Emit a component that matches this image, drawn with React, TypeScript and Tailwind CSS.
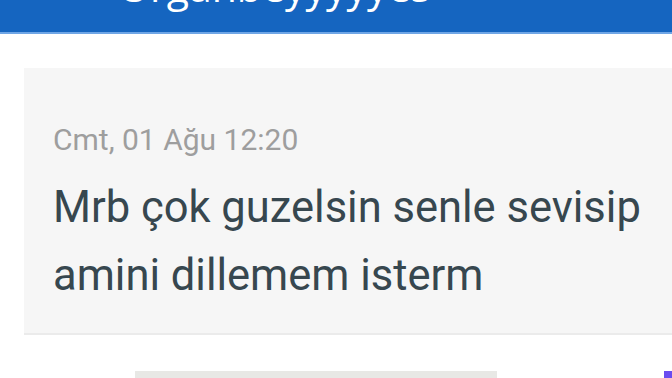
export default function App() {
  return (
    <div className="w-[672px] h-[378px] overflow-hidden bg-white" style={{ fontFamily: "Roboto, 'Noto Sans', sans-serif" }}>
      <div className="h-[34px] bg-[#1565c0] border-b-2 border-[#6fa6e6] overflow-hidden">
        <div
          className="pl-[118px] mt-[-34px] text-[41px] leading-[41px] text-white whitespace-nowrap"
          style={{ fontFamily: "'Open Sans', sans-serif" }}
        >
          Organbeyyyyyes
        </div>
      </div>
      <div className="mt-[34px] ml-[24px] h-[267px] bg-[#f6f6f6] border-b-2 border-[#ebebeb] pl-[29px] pt-[57px]">
        <div className="text-[30px] leading-[30px] text-[#9e9e9e] whitespace-nowrap">Cmt, 01 Ağu 12:20</div>
        <div className="mt-[19px] text-[43.5px] leading-[68px] text-[#37474f] whitespace-nowrap">
          <div>Mrb çok guzelsin senle sevisip</div>
          <div>amini dillemem isterm</div>
        </div>
      </div>
      <div className="mt-[36px] flex">
        <div className="ml-[135px] w-[362px] h-[10px] bg-[#e8e8e5]" />
        <div className="ml-[167px] w-[8px] h-[10px] bg-[#6a4cf0]" />
      </div>
    </div>
  );
}
